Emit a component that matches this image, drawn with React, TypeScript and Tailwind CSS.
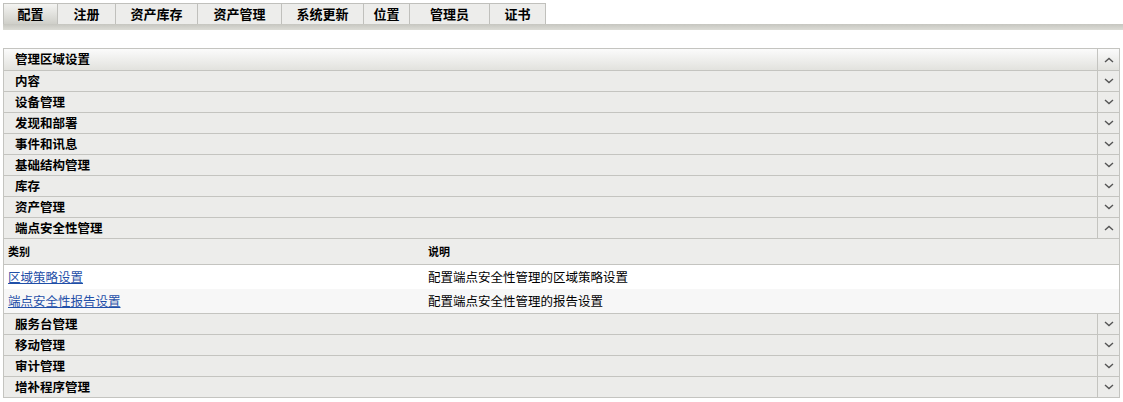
import React from "react";

const tabs = ["配置", "注册", "资产库存", "资产管理", "系统更新", "位置", "管理员", "证书"];
const tabWidths = ["w-[55px]", "w-[58px]", "w-[82px]", "w-[84px]", "w-[82px]", "w-[46px]", "w-[80px]", "w-[56px]"];

const before = ["内容", "设备管理", "发现和部署", "事件和讯息", "基础结构管理", "库存", "资产管理"];
const after = ["服务台管理", "移动管理", "审计管理", "增补程序管理"];

const rows = [
  { name: "区域策略设置", desc: "配置端点安全性管理的区域策略设置" },
  { name: "端点安全性报告设置", desc: "配置端点安全性管理的报告设置" },
];

const Chevron: React.FC<{ up?: boolean }> = ({ up }) => (
  <svg width="10" height="6" viewBox="0 0 10 6" className="text-[#555]">
    <path
      d={up ? "M1 5 L5 1.5 L9 5" : "M1 1 L5 4.5 L9 1"}
      fill="none"
      stroke="currentColor"
      strokeWidth="1.4"
    />
  </svg>
);

const SectionRow: React.FC<{ label: string; up?: boolean; top?: boolean }> = ({ label, up, top }) => (
  <div
    className={`flex h-[21px] border-b border-[#c4c4c0] ${
      top ? "h-[22px] bg-gradient-to-b from-[#fbfbfb] to-[#e2e2de]" : "bg-[#ececea]"
    }`}
  >
    <div className="flex-1 flex items-center pl-[11px] text-[12.5px] font-bold text-black">{label}</div>
    <div className="w-[22px] flex items-center justify-center border-l border-[#c4c4c0]">
      <Chevron up={up} />
    </div>
  </div>
);

export default function App() {
  return (
    <div
      className="w-[1123px] h-[402px] bg-white overflow-hidden"
      style={{ fontFamily: '"Noto Sans CJK SC", "Noto Sans", sans-serif' }}
    >
      {/* tabs */}
      <div className="pt-[3px] pl-[3px]">
        <div className="flex h-[21px]">
          {tabs.map((t, i) => (
            <div
              key={t}
              className={`${tabWidths[i]} flex items-center justify-center text-[13px] font-bold text-black border-t border-r border-[#c0c0bc] ${
                i === 0
                  ? "border-l bg-gradient-to-b from-[#f4f4f2] to-[#cfcfc9]"
                  : "bg-[#ededeb]"
              }`}
            >
              {t}
            </div>
          ))}
        </div>
        <div className="h-[6px] bg-gradient-to-b from-[#c6c6c0] to-[#dcdcd6]" />
      </div>

      {/* panel */}
      <div className="mt-[18px] ml-[3px] w-[1117px] border-l border-r border-t border-[#c4c4c0]">
        <SectionRow label="管理区域设置" up top />
        {before.map((l) => (
          <SectionRow key={l} label={l} />
        ))}
        <SectionRow label="端点安全性管理" up />

        <div className="border-b border-[#c4c4c0]">
          <div className="flex h-[26px] items-center bg-[#ededeb] border-b border-[#c4c4c0] text-[11px] font-bold text-black">
            <div className="w-[424px] pl-[4px]">类别</div>
            <div className="flex-1">说明</div>
          </div>
          {rows.map((r, i) => (
            <div
              key={r.name}
              className={`flex h-[24px] items-center text-[12.5px] ${i === 0 ? "bg-white" : "bg-[#f7f7f7]"}`}
            >
              <div className="w-[424px] pl-[4px]">
                <a href="#" className="text-[#1f4fa8] underline">
                  {r.name}
                </a>
              </div>
              <div className="flex-1 text-black">{r.desc}</div>
            </div>
          ))}
        </div>

        {after.map((l) => (
          <SectionRow key={l} label={l} />
        ))}
      </div>
    </div>
  );
}
